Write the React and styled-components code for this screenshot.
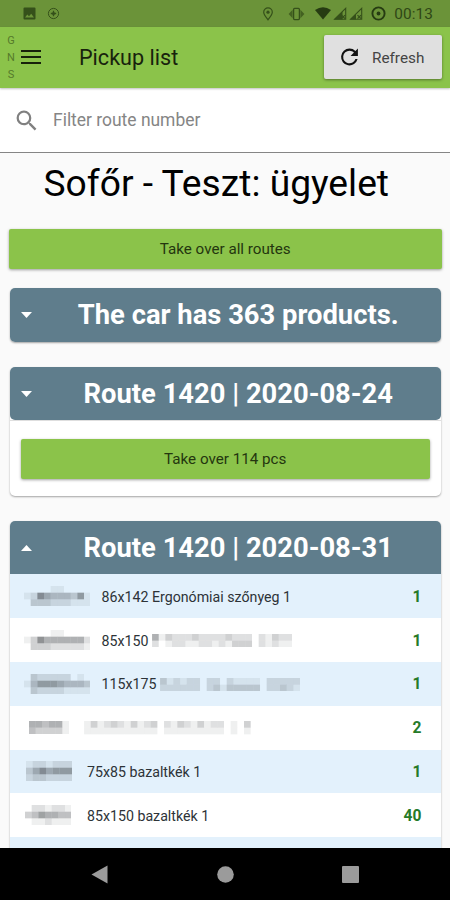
import React from 'react';
import styled, { createGlobalStyle } from 'styled-components';

const GlobalStyle = createGlobalStyle`
	* {
		box-sizing: border-box;
	}
	body {
		margin: 0;
		font-family: Roboto, "Liberation Sans", sans-serif;
		background: #fafafa;
	}
`;

//Layout
const Screen = styled.div`
	display: flex;
	flex-direction: column;
	width: 450px;
	height: 900px;
	overflow: hidden;
	background: #fafafa;
	color: #000;
`;

const StatusBar = styled.div`
	display: flex;
	flex: none;
	align-items: center;
	height: 26.5px;
	padding: 1px 17px 0 23px;
	background: #6b9339;
	color: #35501a;
	& svg {
		display: block;
		flex: none;
	}
`;

const StatusLeft = styled.div`
	display: flex;
	gap: 11px;
	align-items: center;
	flex: 1;
`;

const StatusRight = styled.div`
	display: flex;
	align-items: center;
	gap: 8px;
`;

const Connectivity = styled.div`
	display: flex;
	gap: 2px;
	margin-left: 2px;
`;

const Alerts = styled.div`
	display: flex;
	gap: 14px;
`;

const Clock = styled.span`
	font-size: 15.4px;
	line-height: 20px;
	letter-spacing: 0.1px;
	color: #2f4716;
`;

const AppBar = styled.header`
	display: flex;
	flex: none;
	align-items: center;
	position: relative;
	z-index: 1;
	height: 61.5px;
	padding: 0 8px 0 7px;
	background: #8bc34a;
	box-shadow: 0 1px 2px rgba(0, 0, 0, .25);
`;

const Initials = styled.div`
	display: flex;
	flex-direction: column;
	align-items: center;
	width: 8px;
	font-size: 11px;
	line-height: 17px;
	color: #557a2a;
`;

const MenuButton = styled.button`
	display: flex;
	padding: 0;
	margin-left: 6px;
	border: 0;
	background: none;
`;

const PageTitle = styled.h1`
	flex: 1;
	margin: 0;
	padding: 2px 0 0 38px;
	font-size: 21.6px;
	line-height: 28px;
	font-weight: 400;
	color: #18220d;
`;

const RefreshButton = styled.button`
	display: flex;
	align-items: center;
	width: 118px;
	height: 44px;
	margin-top: -1px;
	padding: 0 0 0 15px;
	border: 0;
	border-radius: 2px;
	background: #e0e0e0;
	box-shadow: 0 1px 3px rgba(0, 0, 0, .4);
	font-family: inherit;
	font-size: 15.3px;
	color: #444;
	& span {
		margin-left: 12px;
		padding-top: 2px;
	}
`;

const SearchBar = styled.div`
	display: flex;
	flex: none;
	align-items: center;
	height: 65px;
	padding: 0 16px;
	border-bottom: 1px solid #858585;
	background: #fff;
`;

const SearchInput = styled.input`
	flex: 1;
	margin-left: 16px;
	padding: 0;
	border: 0;
	outline: 0;
	background: none;
	font-family: inherit;
	font-size: 17.45px;
	line-height: 22px;
	&::placeholder {
		color: #858585;
		opacity: 1;
	}
`;

const Content = styled.main`
	flex: 1;
	min-height: 0;
	overflow: hidden;
	padding: 0 8.5px 0 9px;
`;

const Driver = styled.h2`
	height: 62px;
	margin: 0 0 14px;
	padding-right: 18px;
	font-size: 37.2px;
	line-height: 61px;
	font-weight: 400;
	text-align: center;
	white-space: nowrap;
`;

const TakeOverButton = styled.button`
	display: block;
	width: 100%;
	height: 39.5px;
	padding: 0;
	border: 0;
	border-radius: 2px;
	background: #8bc34a;
	box-shadow: 0 1px 3px rgba(0, 0, 0, .38);
	font-family: inherit;
	font-size: 15.2px;
	color: #24360f;
`;

const Card = styled.section`
	margin: ${props => props.top}px 1px 0;
	border-radius: 5px;
	background: #fff;
	box-shadow: 0 1px 2px rgba(0, 0, 0, .35);
`;

const CardHeader = styled.div`
	display: flex;
	align-items: center;
	height: 53.7px;
	padding: 0 11px;
	border-radius: ${props => props.open ? '5px 5px 0 0' : '5px'};
	background: #5f7d8c;
	color: #fff;
`;

const CardTitle = styled.h3`
	flex: 1;
	margin: 0;
	padding: 1px 0 0 15px;
	font-size: 27.35px;
	line-height: 34px;
	font-weight: 700;
	text-align: center;
	white-space: nowrap;
`;

const CardBody = styled.div`
	padding: 18px 11px 17.5px;
	border-top: 1px solid #dedede;
`;

const ProductRow = styled.div`
	display: flex;
	align-items: center;
	height: 43.8px;
	padding: 0 19px 0 13.5px;
	background: ${props => props.shaded ? '#e3f1fc' : '#fff'};
	font-size: 14.2px;
	color: #2d3338;
`;

const Code = styled.div`
	display: flex;
	width: ${props => props.width}px;
	padding-left: ${props => props.indent || 0}px;
`;

const Name = styled.div`
	display: flex;
	flex: 1;
	align-items: center;
	gap: 4px;
	padding-top: 1px;
	white-space: nowrap;
`;

const Count = styled.div`
	padding-top: 1px;
	font-size: 15.6px;
	font-weight: 700;
	color: #267a29;
`;

const NavBar = styled.nav`
	display: flex;
	flex: none;
	align-items: center;
	justify-content: space-between;
	height: 52px;
	padding: 0 91px;
	background: #000;
`;

//Each digit is one block of the mosaic, higher is darker
const CELL = 6.67;

const Mosaic = ({ rows }) => {
	const width = rows[0].length * CELL;
	const height = rows.length * CELL;

	return (
		<svg width={width} height={height} viewBox={`0 0 ${width} ${height}`}>
			{rows.map((row, y) => row.split('').map((level, x) => (
				<rect
					key={`${x}-${y}`}
					x={x * CELL}
					y={y * CELL}
					width={CELL}
					height={CELL}
					fill="#2b3034"
					fillOpacity={level * .075}
				/>
			)))}
		</svg>
	);
};

//Icons
const PictureIcon = () => (
	<svg width="13" height="13" viewBox="0 0 13 13">
		<path fill="currentColor" fillRule="evenodd" d="M1.5 .5h10q1 0 1 1v10q0 1-1 1h-10q-1 0-1-1v-10q0-1 1-1zM2 10.5h9L8.2 6.8 6 9.3 4.3 7.6z" />
	</svg>
);

const TargetIcon = () => (
	<svg width="13" height="13" viewBox="0 0 13 13" fill="none" stroke="currentColor">
		<circle cx="6.5" cy="6.5" r="5.1" strokeWidth="1" />
		<path d="M6.5 3.8v5.4M3.8 6.5h5.4" strokeWidth="1.3" />
		<circle cx="6.5" cy="6.5" r="1.5" fill="currentColor" stroke="none" />
	</svg>
);

const PinIcon = () => (
	<svg width="12" height="14" viewBox="0 0 12 14" fill="none" stroke="currentColor">
		<path d="M6 12.8C3.6 9.7 1.7 7.5 1.7 5.2a4.3 4.3 0 0 1 8.6 0C10.3 7.5 8.4 9.7 6 12.8z" strokeWidth="1.2" />
		<circle cx="6" cy="5.2" r="1.6" fill="currentColor" stroke="none" />
	</svg>
);

const VibrateIcon = () => (
	<svg width="17" height="14" viewBox="0 0 17 14">
		<rect x="5.6" y="1.4" width="5.8" height="11.2" rx="1" fill="none" stroke="currentColor" strokeWidth="1.3" />
		<path d="M4.6 2.8v8.4L.6 7zM12.4 2.8v8.4l4-4.2z" fill="currentColor" opacity=".75" />
	</svg>
);

const WifiIcon = () => (
	<svg width="16" height="13" viewBox="0 0 16 13">
		<path fill="#263b12" d="M0 3.1Q8-2.8 16 3.1L8 12.6z" />
	</svg>
);

const SignalIcon = ({ weak }) => (
	<svg width="14" height="13" viewBox="0 0 14 13">
		<path fill="none" stroke="currentColor" strokeWidth="1.1" d="M12.7 1.3v10.9H1.6z" />
		<path fill="currentColor" d={weak ? 'M7 7v5.5H1z' : 'M9.5 4.5v8H1z'} />
		<path stroke="currentColor" strokeWidth="1.2" d="M8.5 8.2l3.5 3.5M12 8.2l-3.5 3.5" />
	</svg>
);

const SyncIcon = () => (
	<svg width="15" height="15" viewBox="0 0 15 15">
		<circle cx="7.5" cy="7.5" r="6.1" fill="none" stroke="#263b12" strokeWidth="1.9" />
		<circle cx="7.5" cy="7.5" r="1.9" fill="#263b12" />
	</svg>
);

const MenuIcon = () => (
	<svg width="20" height="14" viewBox="0 0 20 14">
		<path stroke="#17220b" strokeWidth="2" d="M0 1h20M0 7h20M0 13h20" />
	</svg>
);

const RefreshIcon = () => (
	<svg width="21" height="24" viewBox="2 1 20 22">
		<path fill="#111" d="M17.65 6.35A7.95 7.95 0 0 0 12 4a8 8 0 1 0 7.73 10h-2.08A6 6 0 1 1 12 6c1.66 0 3.14.69 4.22 1.78L13 11h7V4z" />
	</svg>
);

const SearchIcon = () => (
	<svg width="21" height="21" viewBox="2.5 2.5 18.5 18.5">
		<path fill="#808080" d="M15.5 14h-.79l-.28-.27A6.47 6.47 0 0 0 16 9.5 6.5 6.5 0 1 0 9.5 16c1.61 0 3.09-.59 4.23-1.57l.27.28v.79l5 4.99L20.49 19zm-6 0C7.01 14 5 11.99 5 9.5S7.01 5 9.5 5 14 7.01 14 9.5 11.99 14 9.5 14z" />
	</svg>
);

const Caret = ({ up }) => (
	<svg width="11" height="6" viewBox="0 0 11 6">
		<path fill="#fff" d={up ? 'M0 6 5.5 0 11 6z' : 'M0 0h11L5.5 6z'} />
	</svg>
);

const BackIcon = () => (
	<svg width="17" height="19" viewBox="0 0 17 19">
		<path fill="#9b9b9b" d="M16.5 .5v18L.5 9.5z" />
	</svg>
);

const HomeIcon = () => (
	<svg width="17" height="17" viewBox="0 0 17 17">
		<circle cx="8.5" cy="8.5" r="8.3" fill="#9b9b9b" />
	</svg>
);

const RecentIcon = () => (
	<svg width="17" height="17" viewBox="0 0 17 17">
		<rect width="17" height="17" rx="1" fill="#9b9b9b" />
	</svg>
);

const products = [
	{
		width: 78,
		code: ['0000110000', '1275444361', '0333222111'],
		name: '86x142 Ergonómiai szőnyeg 1',
		count: 1,
	},
	{
		width: 78,
		code: ['0000110000', '1375555552', '0333222221'],
		name: '85x150',
		hidden: ['513222322223222021322', '201221122121333021211'],
		count: 1,
	},
	{
		width: 78,
		code: ['0322222010', '1466654443', '0322221111'],
		name: '115x175',
		hidden: ['312122022021111022222', '222222023133333022321'],
		count: 1,
	},
	{
		width: 60.5,
		indent: 5,
		code: ['554551', '433331'],
		hidden: ['1312321312302132131220103', '1111111111101111111110101'],
		count: 2,
	},
	{
		width: 63.5,
		indent: 2,
		code: ['1221222', '3575666', '2332222'],
		name: '75x85 bazaltkék 1',
		count: 1,
	},
	{
		width: 63.5,
		indent: 1,
		code: ['0221221', '3465544', '0112111'],
		name: '85x150 bazaltkék 1',
		count: 40,
	},
	{ width: 63.5, code: ['0'], count: '' },
];

const ProductList = ({ items }) => items.map((item, index) => (
	<ProductRow key={index} shaded={index % 2 === 0}>
		<Code width={item.width} indent={item.indent}><Mosaic rows={item.code} /></Code>
		<Name>
			{item.name}
			{item.hidden && <Mosaic rows={item.hidden} />}
		</Name>
		<Count>{item.count}</Count>
	</ProductRow>
));

const App = () => (
	<Screen>
		<GlobalStyle />
		<StatusBar>
			<StatusLeft>
				<PictureIcon />
				<TargetIcon />
			</StatusLeft>
			<StatusRight>
				<Alerts>
					<PinIcon />
					<VibrateIcon />
				</Alerts>
				<Connectivity>
					<WifiIcon />
					<SignalIcon />
					<SignalIcon weak />
				</Connectivity>
				<SyncIcon />
				<Clock>00:13</Clock>
			</StatusRight>
		</StatusBar>
		<AppBar>
			<Initials>
				<span>G</span>
				<span>N</span>
				<span>S</span>
			</Initials>
			<MenuButton><MenuIcon /></MenuButton>
			<PageTitle>Pickup list</PageTitle>
			<RefreshButton>
				<RefreshIcon />
				<span>Refresh</span>
			</RefreshButton>
		</AppBar>
		<SearchBar>
			<SearchIcon />
			<SearchInput placeholder="Filter route number" />
		</SearchBar>
		<Content>
			<Driver>Sofőr - Teszt: ügyelet</Driver>
			<TakeOverButton>Take over all routes</TakeOverButton>
			<Card top={19.5}>
				<CardHeader>
					<Caret />
					<CardTitle>The car has 363 products.</CardTitle>
				</CardHeader>
			</Card>
			<Card top={25}>
				<CardHeader>
					<Caret />
					<CardTitle>Route 1420 | 2020-08-24</CardTitle>
				</CardHeader>
				<CardBody>
					<TakeOverButton>Take over 114 pcs</TakeOverButton>
				</CardBody>
			</Card>
			<Card top={24.3}>
				<CardHeader open>
					<Caret up />
					<CardTitle>Route 1420 | 2020-08-31</CardTitle>
				</CardHeader>
				<ProductList items={products} />
			</Card>
		</Content>
		<NavBar>
			<BackIcon />
			<HomeIcon />
			<RecentIcon />
		</NavBar>
	</Screen>
);

export default App;
